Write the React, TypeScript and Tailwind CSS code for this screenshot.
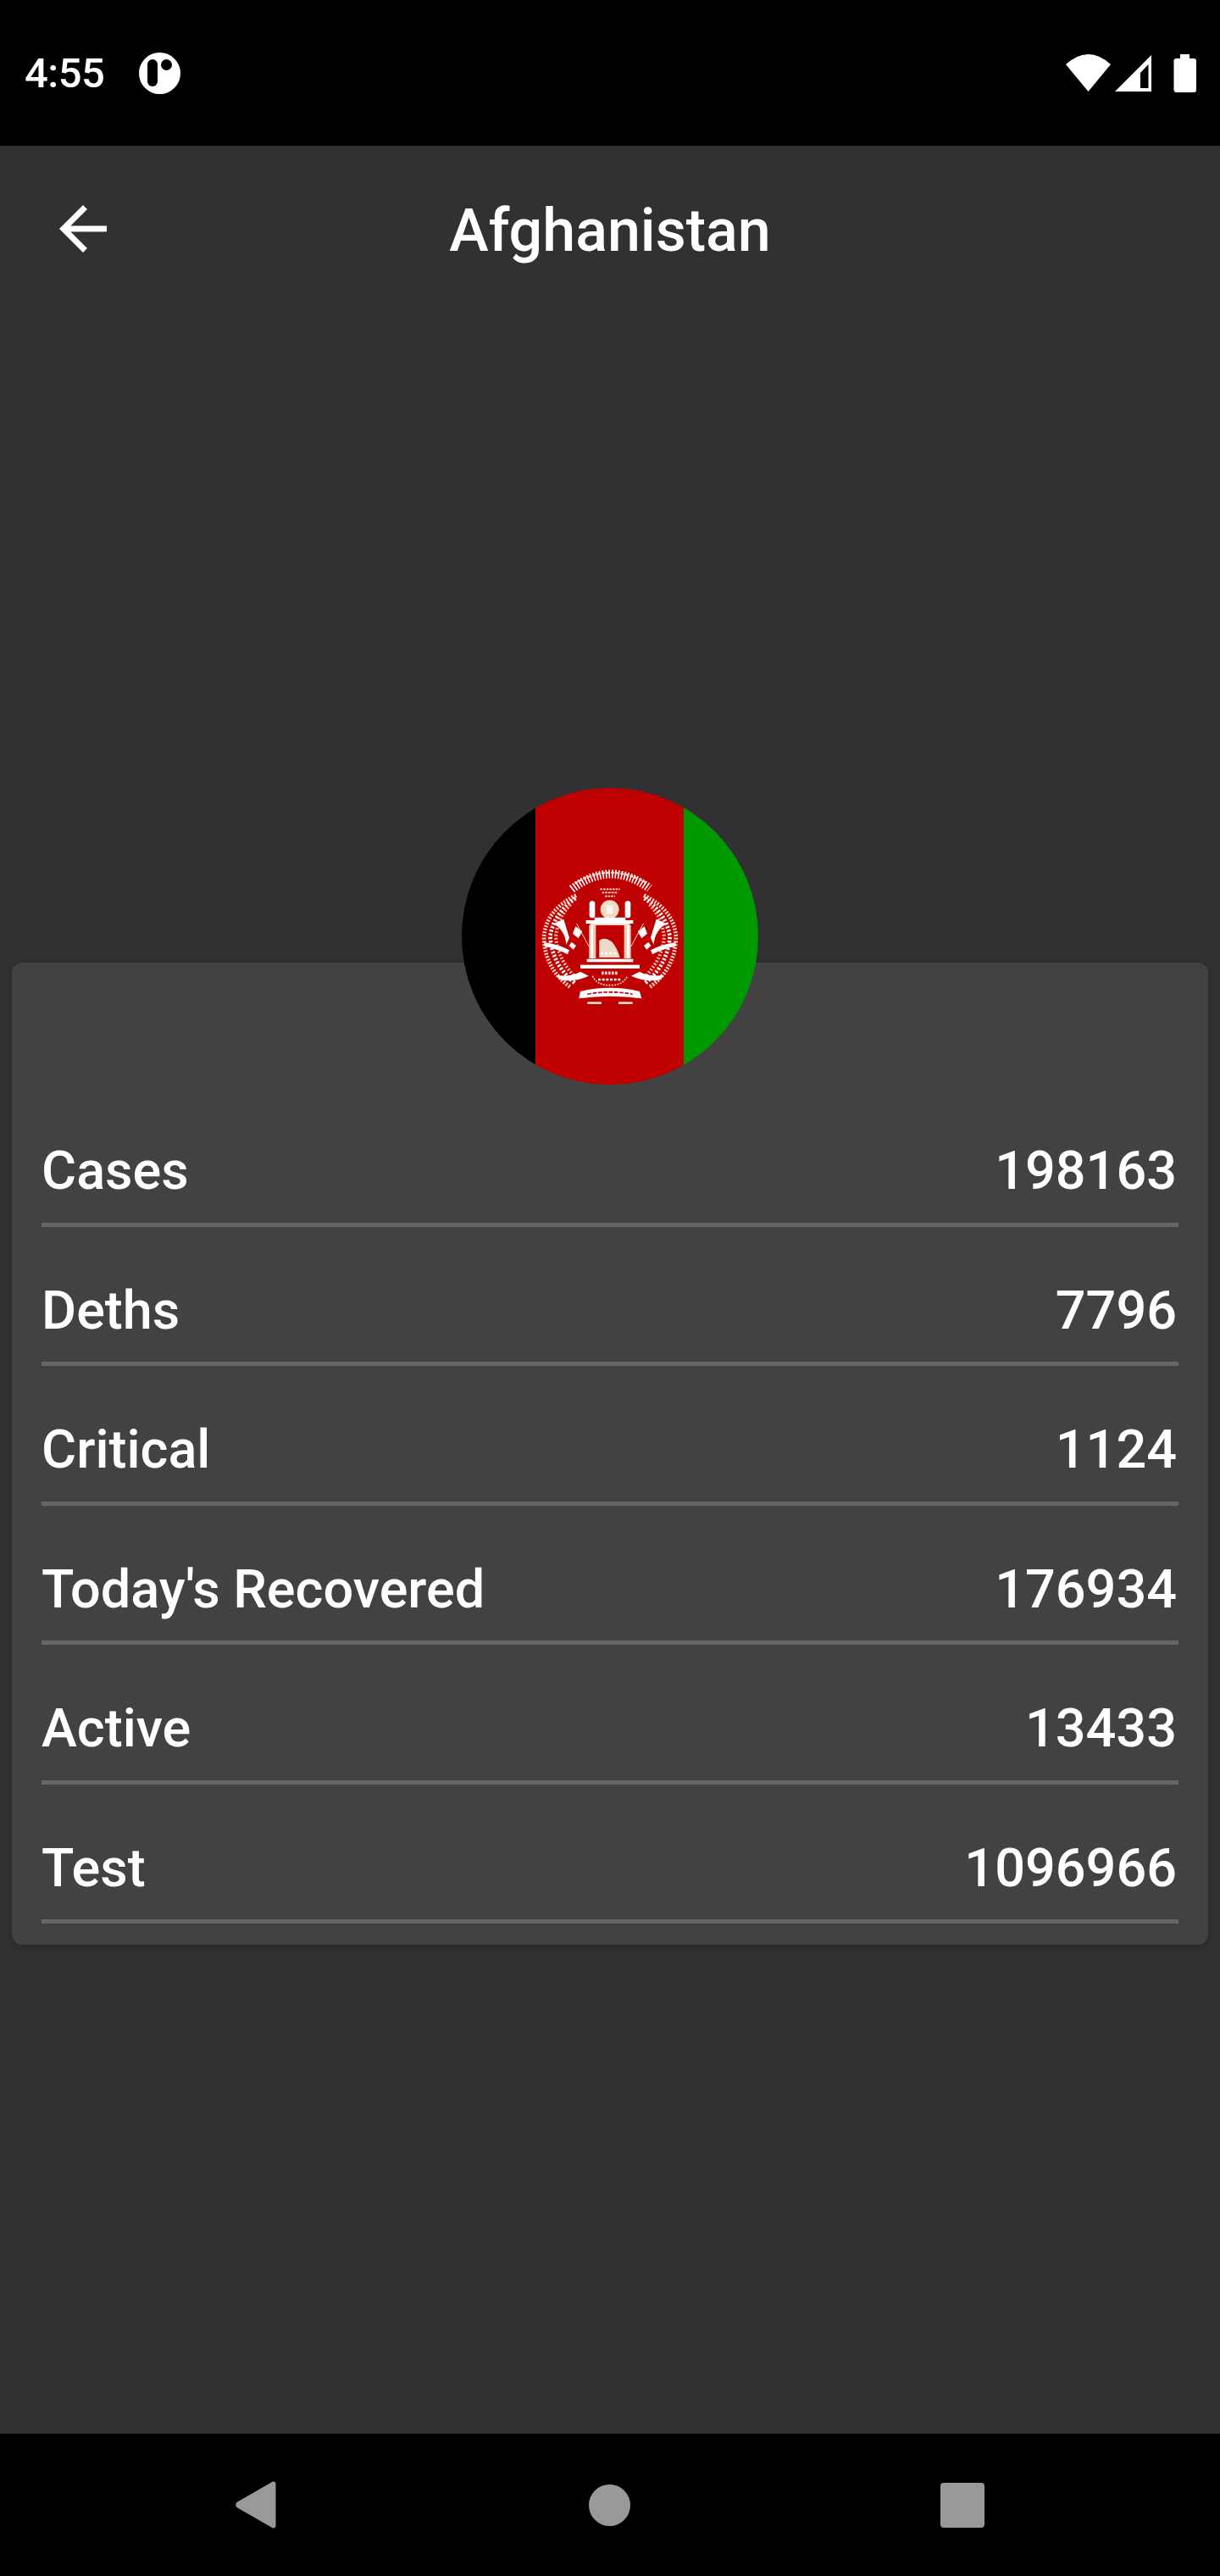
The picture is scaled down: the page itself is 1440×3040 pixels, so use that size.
import React from 'react'

const rows = [
  { label: 'Cases', value: '198163' },
  { label: 'Deths', value: '7796' },
  { label: 'Critical', value: '1124' },
  { label: "Today's Recovered", value: '176934' },
  { label: 'Active', value: '13433' },
  { label: 'Test', value: '1096966' },
]

const StatusIcons = () => (
  <svg width="160" height="50" viewBox="1258 60 160 50" className="block">
    <path d="M1258 75 Q1284.5 51 1311 75 L1284.5 107 Z" fill="#fff" />
    <path fillRule="evenodd" d="M1316 107 L1359 64 V107 Z M1346 85 V103 H1355.5 V75 Z" fill="#fff" />
    <path d="M1393 63 H1404 V68 H1409 Q1412 68 1412 71 V105 Q1412 108 1409 108 H1388.5 Q1385.5 108 1385.5 105 V71 Q1385.5 68 1388.5 68 H1393 Z" fill="#fff" />
  </svg>
)

// half of the emblem, drawn twice and mirrored on the centre line
const EmblemSide = () => (
  <g>
    <path d="M150 140 Q45 190 36 285 Q38 400 130 465" fill="none" stroke="#f8d8c8" strokeWidth="14" strokeDasharray="6 5" />
    <path d="M148 150 Q70 205 58 285 Q65 385 145 450" fill="none" stroke="#ffffff" strokeWidth="14" strokeDasharray="7 6" />
    <path d="M130 172 Q84 220 78 288 Q86 370 150 432" fill="none" stroke="#f2b9a4" strokeWidth="12" strokeDasharray="6 6" />
    <path d="M70 240 L106 224 L126 290 L115 314 Q112 265 70 240 Z" fill="#fff" />
    <path d="M36 306 Q90 314 126 334 L120 349 Q75 326 40 322 Z" fill="#fff" />
    <path d="M78 422 Q130 430 165 410 L195 425 Q140 450 92 438 Z" fill="#fff" />
    <path d="M148 250 L172 268 L158 292 L138 275 Z" fill="#fff" />
    <path d="M134 305 L150 318 L140 332 L125 318 Z" fill="#fff" />
    <path d="M152 240 L196 322" stroke="#f3d9c8" strokeWidth="3" fill="none" />
    <rect x="197" y="160" width="20" height="60" rx="9" fill="#fff" />
    <rect x="196" y="245" width="24" height="118" fill="#eecbb3" />
    <rect x="202" y="245" width="8" height="118" fill="#fff" />
    <rect x="188" y="365" width="82" height="11" fill="#fff" />
    <rect x="165" y="386" width="105" height="13" fill="#fff" />
    <rect x="190" y="517" width="50" height="8" fill="#f6dccb" />
  </g>
)

const Emblem = () => (
  <g filter="url(#soften)">
    <EmblemSide />
    <g transform="translate(540 0) scale(-1 1)">
      <EmblemSide />
    </g>
    <path d="M135 118 Q270 12 410 115" fill="none" stroke="#fff" strokeWidth="30" strokeDasharray="5 6" />
    <path d="M145 98 Q270 22 400 96" fill="none" stroke="#f6dccb" strokeWidth="7" strokeDasharray="12 5" />
    <path d="M235 118 H305 M242 130 H298 M252 143 H288" stroke="#f6dccb" strokeWidth="5" strokeDasharray="8 3" />
    <circle cx="269" cy="190" r="33" fill="#f3dac6" />
    <path d="M258 175 H280 V205 H258 Z" fill="#fff" opacity="0.7" />
    <path d="M185 228 H352 V240 H185 Z M215 218 H325 V228 H215 Z" fill="#fff" />
    <rect x="200" y="240" width="140" height="6" fill="#f3dac6" />
    <path d="M228 362 V295 Q228 255 270 255 Q312 255 312 295 V362 Z" fill="#c00000" />
    <path d="M232 360 V300 Q250 285 278 305 Q295 325 305 360 Z" fill="#efdac8" />
    <path d="M235 345 H300" stroke="#fff" strokeWidth="7" strokeDasharray="10 6" />
    <path d="M240 415 H300" stroke="#f6dccb" strokeWidth="11" strokeDasharray="8 4" />
    <path d="M228 438 H310" stroke="#fff" strokeWidth="8" strokeDasharray="9 5" />
    <path d="M208 425 Q225 460 270 458 Q315 460 332 425" fill="none" stroke="#f3d0bd" strokeWidth="5" strokeDasharray="6 4" />
    <path d="M165 480 Q270 455 375 480 L382 505 Q270 490 160 505 Z" fill="#fff" />
    <path d="M190 490 Q270 475 350 490" fill="none" stroke="#c00000" strokeWidth="5" strokeDasharray="14 5" />
  </g>
)

const FlagBadge = () => (
  <svg width="350" height="350" viewBox="0 0 350 350" className="block">
    <defs>
      <clipPath id="round">
        <circle cx="175" cy="175" r="175" />
      </clipPath>
      <filter id="soften" x="-5%" y="-5%" width="110%" height="110%">
        <feGaussianBlur stdDeviation="2" />
      </filter>
    </defs>
    <g clipPath="url(#round)">
      <rect x="0" y="0" width="87" height="350" fill="#000000" />
      <rect x="87" y="0" width="175" height="350" fill="#bf0000" />
      <rect x="262" y="0" width="88" height="350" fill="#009900" />
      <g transform="translate(85 80) scale(0.3333)">
        <Emblem />
      </g>
    </g>
  </svg>
)

export default function App() {
  return (
    <div className="flex flex-col w-[1440px] h-[3040px] bg-[#313131] text-white font-['Roboto',sans-serif]">
      {/* status bar */}
      <div className="flex items-center justify-between h-[172px] bg-black pl-[29px] pr-[22px]">
        <div className="flex items-center gap-[41px]">
          <span className="text-[49px] leading-none font-medium tracking-[-0.5px]">4:55</span>
          <span className="relative w-[49px] h-[49px] rounded-full bg-white">
            <span className="absolute left-[10px] top-[8px] w-[12px] h-[32px] rounded-full bg-black"></span>
            <span className="absolute left-[26px] top-[8px] w-[13px] h-[13px] rounded-full bg-black"></span>
          </span>
        </div>
        <StatusIcons />
      </div>

      {/* header */}
      <div className="grid grid-cols-[1fr_auto_1fr] items-center h-[196px] pl-[56px]">
        <svg width="84" height="84" viewBox="0 0 24 24" fill="#fff" className="block">
          <path d="M20 11H7.83l5.59-5.59L12 4l-8 8 8 8 1.41-1.41L7.83 13H20v-2z" />
        </svg>
        <h1 className="text-[70px] leading-none font-medium pt-[3px] -translate-x-[28px]">Afghanistan</h1>
        <div></div>
      </div>

      {/* content */}
      <div className="flex flex-col flex-1 pt-[562px]">
        <div className="relative z-10 self-center -mb-[144px]">
          <FlagBadge />
        </div>
        <div className="mx-[14px] rounded-[12px] bg-[#424242] px-[35px] pt-[147px] pb-[25px] shadow-[0_2px_6px_rgba(0,0,0,0.25)]">
          {rows.map((row) => (
            <div
              key={row.label}
              className="flex items-center justify-between h-[164.5px] pt-[38px] border-b-[5px] border-[#666666] text-[63px] leading-none font-medium"
            >
              <span>{row.label}</span>
              <span className="pr-[2px]">{row.value}</span>
            </div>
          ))}
        </div>
      </div>

      {/* navigation bar */}
      <div className="grid grid-cols-3 items-center h-[168px] bg-black px-[278px]">
        <svg width="48" height="56" viewBox="0 0 48 56" className="block">
          <path d="M44 0.5 Q47.5 0 47.5 4 V52 Q47.5 56 44 55.5 L1.5 31 Q-1 28 1.5 25 Z" fill="#999999" />
        </svg>
        <span className="justify-self-center w-[49px] h-[49px] rounded-full bg-[#999999]"></span>
        <span className="justify-self-end w-[52px] h-[53px] rounded-[4px] bg-[#999999]"></span>
      </div>
    </div>
  )
}
